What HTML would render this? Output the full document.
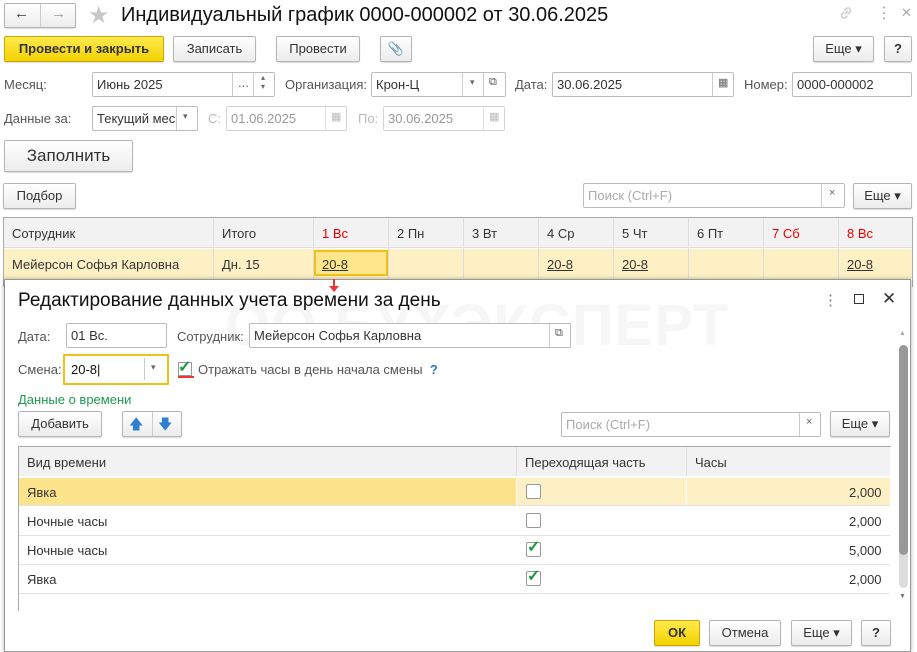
<!DOCTYPE html>
<html><head><meta charset="utf-8">
<style>
*{box-sizing:border-box;margin:0;padding:0}
body{width:917px;height:652px;overflow:hidden;background:#fff;font-family:"Liberation Sans",Arial,sans-serif;font-size:13px;color:#333;position:relative}
.a{position:absolute}
.btn{position:absolute;border:1px solid #b5b5b5;border-radius:2px;background:linear-gradient(#fff,#ececec);box-shadow:0 1px 1px rgba(0,0,0,.15);text-align:center;color:#333;font-size:13px}
.y{background:linear-gradient(#ffe94d,#f2d200);border-color:#c9a800;font-weight:bold;color:#333}
.inp{position:absolute;border:1px solid #bcbcbc;border-radius:2px;background:#fff;padding-left:4px;color:#333}
.dis{color:#999;border-color:#d4d4d4}
.lbl{position:absolute;color:#555}
.grid{position:absolute;border:1px solid #aaa}
.red{color:#e00}
u{text-decoration:underline}
</style></head><body>
<div class="btn" style="left:4px;top:3px;width:72px;height:25px;"></div>
<div class="a" style="left:40px;top:4px;width:1px;height:23px;background:#ccc"></div>
<div class="a" style="left:14px;top:5px;font-size:15px;color:#333">&#8592;</div>
<div class="a" style="left:51px;top:5px;font-size:15px;color:#999">&#8594;</div>
<div class="a" style="left:88px;top:1px;font-size:24px;color:#c8c8c8">&#9733;</div>
<div class="a" style="left:121px;top:4px;font-size:20px;color:#111">Индивидуальный график 0000-000002 от 30.06.2025</div>
<svg class="a" style="left:838px;top:5px" width="16" height="16" viewBox="0 0 16 16"><g fill="none" stroke="#ccc" stroke-width="1.5"><path d="M7 9l3-3"/><path d="M6 7L4 9a2.5 2.5 0 0 0 3.5 3.5L9.5 10.5"/><path d="M10 9l2-2a2.5 2.5 0 0 0-3.5-3.5L6.5 5.5"/></g></svg>
<div class="a" style="left:876px;top:3px;font-size:16px;color:#aaa">&#8942;</div>
<div class="a" style="left:901px;top:5px;font-size:13px;color:#aaa">&#10005;</div>

<div class="btn y" style="left:4px;top:36px;width:160px;height:26px;line-height:24px">Провести и закрыть</div>
<div class="btn" style="left:173px;top:36px;width:83px;height:26px;line-height:24px">Записать</div>
<div class="btn" style="left:276px;top:36px;width:84px;height:26px;line-height:24px">Провести</div>
<div class="btn" style="left:380px;top:36px;width:32px;height:26px;line-height:24px;color:#888">&#128206;</div>
<div class="btn" style="left:813px;top:36px;width:61px;height:26px;line-height:24px">Еще ▾</div>
<div class="btn" style="left:884px;top:36px;width:28px;height:26px;line-height:24px;font-weight:bold">?</div>

<div class="lbl" style="left:4px;top:77px">Месяц:</div>
<div class="inp" style="left:92px;top:72px;width:183px;height:25px;line-height:23px">Июнь 2025</div>
<div class="a" style="left:232px;top:73px;width:1px;height:23px;background:#ccc"></div>
<div class="a" style="left:238px;top:75px;color:#666">...</div>
<div class="a" style="left:253px;top:73px;width:1px;height:23px;background:#ccc"></div>
<div class="a" style="left:261px;top:73px;font-size:8px;color:#666">▴<br>▾</div>
<div class="lbl" style="left:285px;top:77px">Организация:</div>
<div class="inp" style="left:371px;top:72px;width:135px;height:25px;line-height:23px">Крон-Ц</div>
<div class="a" style="left:462px;top:73px;width:1px;height:23px;background:#ccc"></div>
<div class="a" style="left:470px;top:77px;font-size:9px;color:#666">▾</div>
<div class="a" style="left:483px;top:73px;width:1px;height:23px;background:#ccc"></div>
<div class="a" style="left:489px;top:76px;font-size:11px;color:#555">⧉</div>
<div class="lbl" style="left:515px;top:77px">Дата:</div>
<div class="inp" style="left:552px;top:72px;width:182px;height:25px;line-height:23px">30.06.2025</div>
<div class="a" style="left:712px;top:73px;width:1px;height:23px;background:#ccc"></div>
<div class="a" style="left:718px;top:76px;font-size:11px;color:#666">▦</div>
<div class="lbl" style="left:744px;top:77px">Номер:</div>
<div class="inp" style="left:792px;top:72px;width:120px;height:25px;line-height:23px">0000-000002</div>

<div class="lbl" style="left:4px;top:111px">Данные за:</div>
<div class="inp" style="left:92px;top:106px;width:106px;height:25px;line-height:23px;overflow:hidden;white-space:nowrap">Текущий мес</div>
<div class="a" style="left:176px;top:107px;width:1px;height:23px;background:#ccc;"></div>
<div class="a" style="left:183px;top:111px;font-size:9px;color:#666">▾</div>
<div class="lbl" style="left:208px;top:111px;color:#bbb">С:</div>
<div class="inp dis" style="left:226px;top:106px;width:121px;height:25px;line-height:23px">01.06.2025</div>
<div class="a" style="left:325px;top:107px;width:1px;height:23px;background:#ddd"></div>
<div class="a" style="left:331px;top:110px;font-size:11px;color:#bbb">▦</div>
<div class="lbl" style="left:358px;top:111px;color:#bbb">По:</div>
<div class="inp dis" style="left:383px;top:106px;width:122px;height:25px;line-height:23px">30.06.2025</div>
<div class="a" style="left:483px;top:107px;width:1px;height:23px;background:#ddd"></div>
<div class="a" style="left:489px;top:110px;font-size:11px;color:#bbb">▦</div>

<div class="btn" style="left:4px;top:140px;width:129px;height:32px;line-height:30px;font-size:17px">Заполнить</div>

<div class="btn" style="left:3px;top:183px;width:73px;height:26px;line-height:24px">Подбор</div>
<div class="inp" style="left:583px;top:183px;width:262px;height:25px;line-height:23px;color:#aaa">Поиск (Ctrl+F)</div>
<div class="a" style="left:821px;top:184px;width:1px;height:23px;background:#ccc"></div>
<div class="a" style="left:829px;top:187px;font-size:11px;color:#666">×</div>
<div class="btn" style="left:853px;top:183px;width:59px;height:26px;line-height:24px">Еще ▾</div>

<div class="grid" style="left:3px;top:217px;width:910px;height:70px;background:#fff;border-bottom:none"></div>
<div class="a" style="left:4px;top:218px;width:908px;height:30px;background:#f2f2f2;border-bottom:1px solid #ddd"></div>
<div class="a" style="left:4px;top:249px;width:908px;height:30px;background:#fdf0c4"></div>
<div class="a" style="left:213px;top:218px;width:1px;height:61px;background:#ddd"></div>
<div class="a" style="left:313px;top:218px;width:1px;height:61px;background:#ddd"></div>
<div class="a" style="left:388px;top:218px;width:1px;height:61px;background:#ddd"></div>
<div class="a" style="left:463px;top:218px;width:1px;height:61px;background:#ddd"></div>
<div class="a" style="left:538px;top:218px;width:1px;height:61px;background:#ddd"></div>
<div class="a" style="left:613px;top:218px;width:1px;height:61px;background:#ddd"></div>
<div class="a" style="left:688px;top:218px;width:1px;height:61px;background:#ddd"></div>
<div class="a" style="left:763px;top:218px;width:1px;height:61px;background:#ddd"></div>
<div class="a" style="left:838px;top:218px;width:1px;height:61px;background:#ddd"></div>
<div class="a" style="left:314px;top:250px;width:74px;height:26px;background:#fde68c;border:2px solid #f2c118"></div>
<div class="a" style="left:12px;top:226px">Сотрудник</div>
<div class="a" style="left:222px;top:226px">Итого</div>
<div class="a red" style="left:322px;top:226px">1 Вс</div>
<div class="a" style="left:397px;top:226px">2 Пн</div>
<div class="a" style="left:472px;top:226px">3 Вт</div>
<div class="a" style="left:547px;top:226px">4 Ср</div>
<div class="a" style="left:622px;top:226px">5 Чт</div>
<div class="a" style="left:697px;top:226px">6 Пт</div>
<div class="a red" style="left:772px;top:226px">7 Сб</div>
<div class="a red" style="left:847px;top:226px">8 Вс</div>
<div class="a" style="left:12px;top:257px">Мейерсон Софья Карловна</div>
<div class="a" style="left:222px;top:257px">Дн. 15</div>
<div class="a" style="left:322px;top:257px"><u>20-8</u></div>
<div class="a" style="left:547px;top:257px"><u>20-8</u></div>
<div class="a" style="left:622px;top:257px"><u>20-8</u></div>
<div class="a" style="left:847px;top:257px"><u>20-8</u></div>

<div class="a" style="left:4px;top:279px;width:907px;height:373px;background:#fff;border:1px solid #999;box-shadow:0 0 4px rgba(0,0,0,.3)"></div>
<div class="a" style="left:333px;top:279px;width:2px;height:10px;background:#e33"></div>
<div class="a" style="left:329px;top:286px;width:0;height:0;border-left:5px solid transparent;border-right:5px solid transparent;border-top:6px solid #e33"></div>
<div class="a" style="left:225px;top:292px;font-size:58px;font-weight:bold;color:#f6f6f6;letter-spacing:1px">ОО БУХЭКСПЕРТ</div>
<div class="a" style="left:18px;top:290px;font-size:19px;color:#111">Редактирование данных учета времени за день</div>
<div class="a" style="left:823px;top:291px;font-size:15px;color:#777">&#8942;</div>
<div class="a" style="left:854px;top:294px;width:10px;height:10px;border:1.5px solid #333"></div>
<div class="a" style="left:882px;top:289px;font-size:17px;color:#333">&#10005;</div>

<div class="lbl" style="left:18px;top:329px">Дата:</div>
<div class="inp" style="left:66px;top:323px;width:101px;height:25px;line-height:23px">01 Вс.</div>
<div class="lbl" style="left:177px;top:329px">Сотрудник:</div>
<div class="inp" style="left:249px;top:323px;width:322px;height:25px;line-height:23px">Мейерсон Софья Карловна</div>
<div class="a" style="left:549px;top:324px;width:1px;height:23px;background:#ccc"></div>
<div class="a" style="left:555px;top:327px;font-size:11px;color:#555">⧉</div>

<div class="lbl" style="left:18px;top:362px">Смена:</div>
<div class="a" style="left:63px;top:354px;width:106px;height:31px;border:2px solid #f2c118;background:#fff;padding:6px 0 0 6px;color:#111">20-8|</div>
<div class="a" style="left:144px;top:358px;width:1px;height:22px;background:#ccc"></div>
<div class="a" style="left:151px;top:362px;font-size:9px;color:#666">▾</div>
<div class="a" style="left:178px;top:362px;width:14px;height:14px;border:1px solid #999;background:#fff"></div>
<div class="a" style="left:178px;top:376px;width:16px;height:2px;background:#e33"></div>
<div class="a" style="left:178px;top:357px;font-size:16px;color:#1a9a3a;font-weight:bold">✓</div>
<div class="lbl" style="left:198px;top:362px">Отражать часы в день начала смены <span style="color:#2a7ab8;font-weight:bold">&nbsp;?</span></div>
<div class="a" style="left:18px;top:392px;color:#1e9a4e">Данные о времени</div>

<div class="btn" style="left:18px;top:411px;width:84px;height:26px;line-height:24px">Добавить</div>
<div class="btn" style="left:122px;top:411px;width:60px;height:26px"></div>
<div class="a" style="left:152px;top:412px;width:1px;height:24px;background:#ccc"></div>
<div class="a" style="left:129px;top:414px;font-size:14px;color:#2c7fd1">&#129093;</div>
<div class="a" style="left:158px;top:414px;font-size:14px;color:#2c7fd1">&#129095;</div>
<div class="inp" style="left:561px;top:412px;width:260px;height:25px;line-height:23px;color:#aaa">Поиск (Ctrl+F)</div>
<div class="a" style="left:799px;top:413px;width:1px;height:23px;background:#ccc"></div>
<div class="a" style="left:806px;top:416px;font-size:11px;color:#666">×</div>
<div class="btn" style="left:830px;top:411px;width:60px;height:26px;line-height:24px">Еще ▾</div>

<div class="a" style="left:18px;top:446px;width:873px;height:165px;border:1px solid #aaa;border-bottom:none;border-right:none"></div>
<div class="a" style="left:19px;top:447px;width:871px;height:29px;background:#f2f2f2"></div>
<div class="a" style="left:516px;top:447px;width:1px;height:29px;background:#ddd"></div>
<div class="a" style="left:686px;top:447px;width:1px;height:29px;background:#ddd"></div>
<div class="a" style="left:27px;top:455px">Вид времени</div>
<div class="a" style="left:525px;top:455px">Переходящая часть</div>
<div class="a" style="left:695px;top:455px">Часы</div>
<div class="a" style="left:19px;top:478px;width:497px;height:27px;background:#fde38c"></div>
<div class="a" style="left:517px;top:478px;width:373px;height:27px;background:#fdf0c4"></div>
<div class="a" style="left:686px;top:478px;width:1px;height:27px;background:#fff"></div>
<div class="a" style="left:19px;top:505px;width:871px;height:1px;background:#e2e2e2"></div>
<div class="a" style="left:19px;top:535px;width:871px;height:1px;background:#e2e2e2"></div>
<div class="a" style="left:19px;top:564px;width:871px;height:1px;background:#e2e2e2"></div>
<div class="a" style="left:19px;top:593px;width:871px;height:1px;background:#e2e2e2"></div>
<div class="a" style="left:27px;top:485px">Явка</div>
<div class="a" style="left:27px;top:514px">Ночные часы</div>
<div class="a" style="left:27px;top:543px">Ночные часы</div>
<div class="a" style="left:27px;top:572px">Явка</div>
<div class="a" style="left:526px;top:484px;width:15px;height:15px;border:1px solid #999;border-radius:2px;background:#fff"></div>
<div class="a" style="left:526px;top:513px;width:15px;height:15px;border:1px solid #999;border-radius:2px;background:#fff"></div>
<div class="a" style="left:526px;top:542px;width:15px;height:15px;border:1px solid #999;border-radius:2px;background:#fff"></div>
<div class="a" style="left:526px;top:571px;width:15px;height:15px;border:1px solid #999;border-radius:2px;background:#fff"></div>
<div class="a" style="left:527px;top:537px;font-size:16px;font-weight:bold;color:#1a9a3a">✓</div>
<div class="a" style="left:527px;top:566px;font-size:16px;font-weight:bold;color:#1a9a3a">✓</div>
<div class="a" style="left:849px;top:485px">2,000</div>
<div class="a" style="left:849px;top:514px">2,000</div>
<div class="a" style="left:849px;top:543px">5,000</div>
<div class="a" style="left:849px;top:572px">2,000</div>

<div class="a" style="left:899px;top:330px;font-size:7px;color:#aaa">▲</div>
<div class="a" style="left:899px;top:345px;width:9px;height:243px;border-radius:5px;background:#ddd"></div>
<div class="a" style="left:899px;top:345px;width:9px;height:210px;border-radius:5px;background:#999"></div>
<div class="a" style="left:899px;top:593px;font-size:7px;color:#777">▼</div>

<div class="btn y" style="left:654px;top:620px;width:46px;height:26px;line-height:24px">ОК</div>
<div class="btn" style="left:709px;top:620px;width:72px;height:26px;line-height:24px">Отмена</div>
<div class="btn" style="left:791px;top:620px;width:61px;height:26px;line-height:24px">Еще ▾</div>
<div class="btn" style="left:861px;top:620px;width:30px;height:26px;line-height:24px;font-weight:bold">?</div>
</body></html>
